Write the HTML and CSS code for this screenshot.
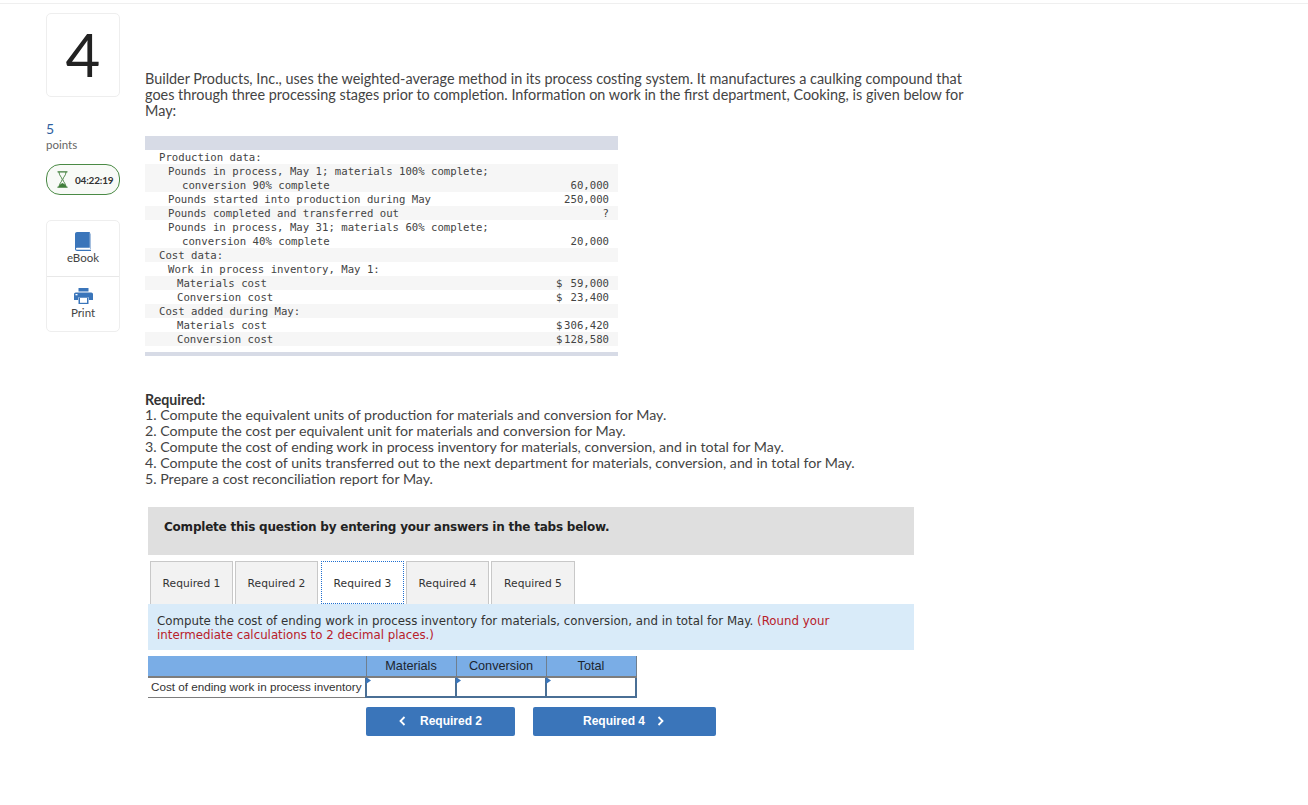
FILE: index.html
```html
<!DOCTYPE html>
<html lang="en">
<head>
<meta charset="utf-8">
<title>Question 4</title>
<link rel="stylesheet" href="styles.css">
</head>
<body>
<div class="topline"></div>
<div class="page">
  <aside class="side">
    <div class="qnum">4</div>
    <div class="pts">5</div>
    <div class="ptslabel">points</div>
    <div class="timer">
      <svg class="hourglass" width="11" height="17" viewBox="0 0 11 17"><path d="M1 .8h9M1 16.200h9" stroke="#3f7d3a" stroke-width="1.300" fill="none" stroke-linecap="round"/><path d="M2 1c0 3.500 2.800 5 3.200 7.500C4.800 11 2 12.500 2 16M9 1c0 3.500-2.800 5-3.200 7.500C6.200 11 9 12.500 9 16" stroke="#3f7d3a" stroke-width=".9" fill="none"/><path d="M1.800 16c0-2 2-3.300 3.700-4 1.700.7 3.700 2 3.700 4z" fill="#3f7d3a"/></svg>
      <span class="time">04:22:19</span>
    </div>
    <div class="tools">
      <div class="tool book">
        <svg width="16" height="19" viewBox="0 0 16 19"><path d="M2 0h12.800v15.700H2.200c-.8 0-1.200.4-1.200 1s.4 1.100 1.200 1.100H16V19H2.200C1 19 0 18 0 16.700V2C0 .9.900 0 2 0z" fill="#3a75ba"/><path d="M15.200 1.500H16V17h-.8z" fill="#8fb0d8"/></svg>
        <span>eBook</span>
      </div>
      <div class="tool print">
        <svg width="19" height="16" viewBox="0 0 19 16"><path d="M4.500 0h10v3.500h-10z" fill="#3a75ba"/><path d="M1.700 4.500h15.600c.9 0 1.700.8 1.700 1.700v5.800h-4V9.500h-11V12H0V6.200c0-.9.800-1.700 1.700-1.700z" fill="#3a75ba"/><path d="M4.500 9.500h10V16h-10z" fill="#3a75ba"/><path d="M6 10h7v4.800H6z" fill="#fff"/><path d="M1.500 6h2v1.300h-2z" fill="#fff"/></svg>
        <span>Print</span>
      </div>
    </div>
  </aside>
  <main class="main">
    <p class="intro">Builder Products, Inc., uses the weighted-average method in its process costing system. It manufactures a caulking compound that goes through three processing stages prior to completion. Information on work in the first department, Cooking, is given below for May:</p>
    <div class="data">
      <div class="data-head"></div>
      <div class="row"><span class="l0">Production data:</span></div>
      <div class="row alt"><span class="l1">Pounds in process, May 1; materials 100% complete;</span></div>
      <div class="row alt"><span class="l2">conversion 90% complete</span><span class="val">60,000</span></div>
      <div class="row"><span class="l1">Pounds started into production during May</span><span class="val">250,000</span></div>
      <div class="row alt"><span class="l1">Pounds completed and transferred out</span><span class="val">?</span></div>
      <div class="row"><span class="l1">Pounds in process, May 31; materials 60% complete;</span></div>
      <div class="row"><span class="l2">conversion 40% complete</span><span class="val">20,000</span></div>
      <div class="row alt"><span class="l0">Cost data:</span></div>
      <div class="row"><span class="l1">Work in process inventory, May 1:</span></div>
      <div class="row alt"><span class="l3">Materials cost</span><span class="val money"><i>$</i><b>59,000</b></span></div>
      <div class="row"><span class="l3">Conversion cost</span><span class="val money"><i>$</i><b>23,400</b></span></div>
      <div class="row alt"><span class="l0">Cost added during May:</span></div>
      <div class="row"><span class="l3">Materials cost</span><span class="val money"><i>$</i><b>306,420</b></span></div>
      <div class="row alt"><span class="l3">Conversion cost</span><span class="val money"><i>$</i><b>128,580</b></span></div>
      <div class="data-foot"></div>
    </div>
    <div class="required">
      <div class="req-title">Required:</div>
      <div>1. Compute the equivalent units of production for materials and conversion for May.</div>
      <div>2. Compute the cost per equivalent unit for materials and conversion for May.</div>
      <div>3. Compute the cost of ending work in process inventory for materials, conversion, and in total for May.</div>
      <div>4. Compute the cost of units transferred out to the next department for materials, conversion, and in total for May.</div>
      <div>5. Prepare a cost reconciliation report for May.</div>
    </div>
    <section class="answer">
      <div class="banner">Complete this question by entering your answers in the tabs below.</div>
      <div class="tabs">
        <div class="tab">Required 1</div>
        <div class="tab">Required 2</div>
        <div class="tab active">Required 3</div>
        <div class="tab">Required 4</div>
        <div class="tab">Required 5</div>
      </div>
      <div class="prompt">Compute the cost of ending work in process inventory for materials, conversion, and in total for May. <span class="hint">(Round your intermediate calculations to 2 decimal places.)</span></div>
      <table class="grid">
        <thead>
          <tr><th class="blank"></th><th>Materials</th><th>Conversion</th><th>Total</th></tr>
        </thead>
        <tbody>
          <tr><td class="label">Cost of ending work in process inventory</td><td class="input"></td><td class="input"></td><td class="input"></td></tr>
        </tbody>
      </table>
      <div class="nav">
        <div class="btn prev"><svg width="7" height="10" viewBox="0 0 7 10"><path d="M5.500 1L1.500 5l4 4" stroke="#fff" stroke-width="1.800" fill="none"/></svg><span>Required 2</span></div>
        <div class="btn next"><span>Required 4</span><svg width="7" height="10" viewBox="0 0 7 10"><path d="M1.500 1l4 4-4 4" stroke="#fff" stroke-width="1.800" fill="none"/></svg></div>
      </div>
    </section>
  </main>
</div>
</body>
</html>
```
FILE: styles.css
```css
* { box-sizing: border-box; }
html, body { margin: 0; padding: 0; background: #fff; }
body { font-family: "Lato", "Open Sans", sans-serif; color: #333; height: 805px; overflow: hidden; }
.topline { height: 4px; border-bottom: 1px solid #efefef; margin-top: 0; }
.page { display: flex; padding-left: 46px; }
.side { width: 74px; flex: none; padding-top: 9px; }
.qnum { height: 84px; border: 1px solid #eee; border-radius: 5px; font-size: 60px; line-height: 80px; text-align: center; color: #222; font-family: "Lato", sans-serif; }
.pts { margin-top: 24px; font-size: 14px; line-height: 16px; color: #2f5f9f; }
.ptslabel { margin-top: 0; font-size: 11.500px; line-height: 16px; color: #666; }
.timer { margin-top: 11px; height: 31px; border: 1px solid #4a8a45; border-radius: 14px; background: #f8faf7; display: flex; align-items: center; padding-left: 10px; gap: 7px; }
.hourglass { flex: none; }
.time { font-size: 10px; font-weight: 700; color: #333; letter-spacing: -0.200px; }
.tools { margin-top: 25px; height: 112px; border: 1px solid #eee; border-radius: 5px; }
.tool { display: flex; flex-direction: column; align-items: center; font-size: 11.500px; color: #444; line-height: 14px; }
.tool svg { display: block; }
.book { height: 56px; padding-top: 11px; border-bottom: 1px solid #e8e8e8; }
.print { padding-top: 11px; gap: 2px; }
.main { margin-left: 25px; width: 830px; flex: none; }
.intro { margin: 67px 0 0; font-size: 14.420px; line-height: 16px; color: #444; width: 825px; }
.data { margin-top: 17px; width: 473px; font-family: "DejaVu Sans Mono", monospace; font-size: 10.670px; color: #444; }
.data-head { height: 14px; background: #d7dbe6; }
.data-foot { height: 4px; background: #d7dbe6; margin-top: 6px; }
.row { height: 14px; line-height: 16px; display: flex; justify-content: space-between; padding-right: 9px; white-space: pre; }
.alt { background: #f6f6f6; }
.l0 { padding-left: 14px; }
.l1 { padding-left: 23px; }
.l2 { padding-left: 37px; }
.l3 { padding-left: 32px; }
.val { text-align: right; }
.money { display: flex; justify-content: space-between; width: 53px; }
.money i, .money b { font-style: normal; font-weight: 400; }
.required { margin-top: 35px; font-size: 14.200px; line-height: 16px; color: #444; }
.req-title { font-weight: 700; color: #333; padding-top: 1px; margin-bottom: -1px; }
.answer { margin-top: 20px; margin-left: 3px; width: 766px; }
.banner { height: 48px; background: #dfdfdf; padding-left: 16px; font-family: "DejaVu Sans", sans-serif; font-weight: 700; font-size: 12px; letter-spacing: -0.220px; line-height: 40px; color: #222; }
.tabs { display: flex; margin-top: 6px; padding-left: 2px; gap: 2px; height: 43px; }
.tab { width: 83px; background: #f2f2f2; border: 1px solid #c8c8c8; border-bottom: none; font-family: "DejaVu Sans", sans-serif; font-size: 10.700px; line-height: 44px; text-align: center; color: #333; }
.tab:last-child { width: 84px; }
.tab.active { background: #fff; border: 1px dotted #1f6fd0; border-bottom: 1px dotted #1f6fd0; margin: 0 0 0 1px; }
.prompt { background: #d9ebf9; height: 46px; padding: 10px 80px 0 9px; font-family: "DejaVu Sans", sans-serif; font-size: 11.800px; line-height: 14px; color: #333; }
.hint { color: #b8202a; }
.grid { margin-top: 6px; border-collapse: collapse; table-layout: fixed; width: 488px; font-family: "Liberation Sans", sans-serif; font-size: 12.700px; color: #333; }
.grid th { height: 21px; padding: 0; background: #7aade6; font-weight: 400; border-left: 1px solid #6f7f8f; border-bottom: 2px solid #7d7d7d; color: #1c2530; width: 90px; }
.grid th.blank { border-left: none; width: 218px; }
.grid th:last-child { border-right: 1px solid #6f7f8f; }
.grid td { height: 20px; padding: 0; }
.grid td.label { padding: 0 0 2px 3px; border-bottom: 1px solid #7d7d7d; white-space: nowrap; font-size: 11.700px; }
.grid td.input { border: 2px solid #4a6f95; background: #fff; position: relative; }
.grid td.input::before { content: ""; position: absolute; left: -1px; top: -1px; width: 5px; height: 7px; background: #3a75ba; clip-path: polygon(0 0, 100% 50%, 0 100%); }
.nav { display: flex; margin-top: 9px; margin-left: 218px; gap: 18px; }
.btn { height: 29px; padding-bottom: 1px; background: #3a75ba; border-radius: 2px; color: #fff; font-family: "Liberation Sans", sans-serif; font-size: 12px; font-weight: 700; display: flex; align-items: center; justify-content: center; gap: 12px; }
.prev { width: 149px; gap: 14px; }
.next { width: 183px; padding-right: 2px; }
```
